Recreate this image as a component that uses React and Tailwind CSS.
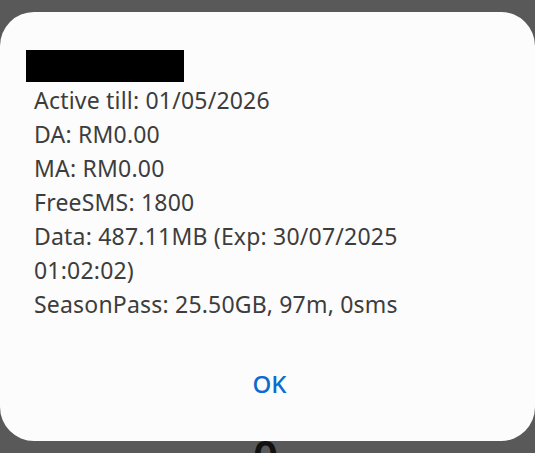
export default function App() {
  const lines = [
    'Active till: 01/05/2026',
    'DA: RM0.00',
    'MA: RM0.00',
    'FreeSMS: 1800',
    'Data: 487.11MB (Exp: 30/07/2025',
    '01:02:02)',
    'SeasonPass: 25.50GB, 97m, 0sms',
  ];

  return (
    <div className="relative w-[535px] h-[453px] overflow-hidden bg-[#595959] pt-3" style={{ fontFamily: '"Noto Sans", Roboto, sans-serif' }}>
      <div className="absolute left-[253px] top-[433px] text-[44px] font-semibold leading-none text-[#111]">0</div>
      <div className="relative w-[535px] h-[429px] bg-[#fcfcfc] rounded-[34px] flex flex-col">
        <div className="ml-[26px] mt-[38px] w-[158px] h-[32px] bg-black" />
        <div className="pl-[34px] pt-[1px] text-[23px] leading-[34px] text-[#3d3d3d] tracking-[0.2px]">
          {lines.map((line) => (
            <div key={line}>{line}</div>
          ))}
        </div>
        <div className="mt-[51px] flex justify-center">
          <span className="text-[24px] font-medium text-[#0a6ccf] leading-none pl-[4px]">OK</span>
        </div>
      </div>
    </div>
  );
}
